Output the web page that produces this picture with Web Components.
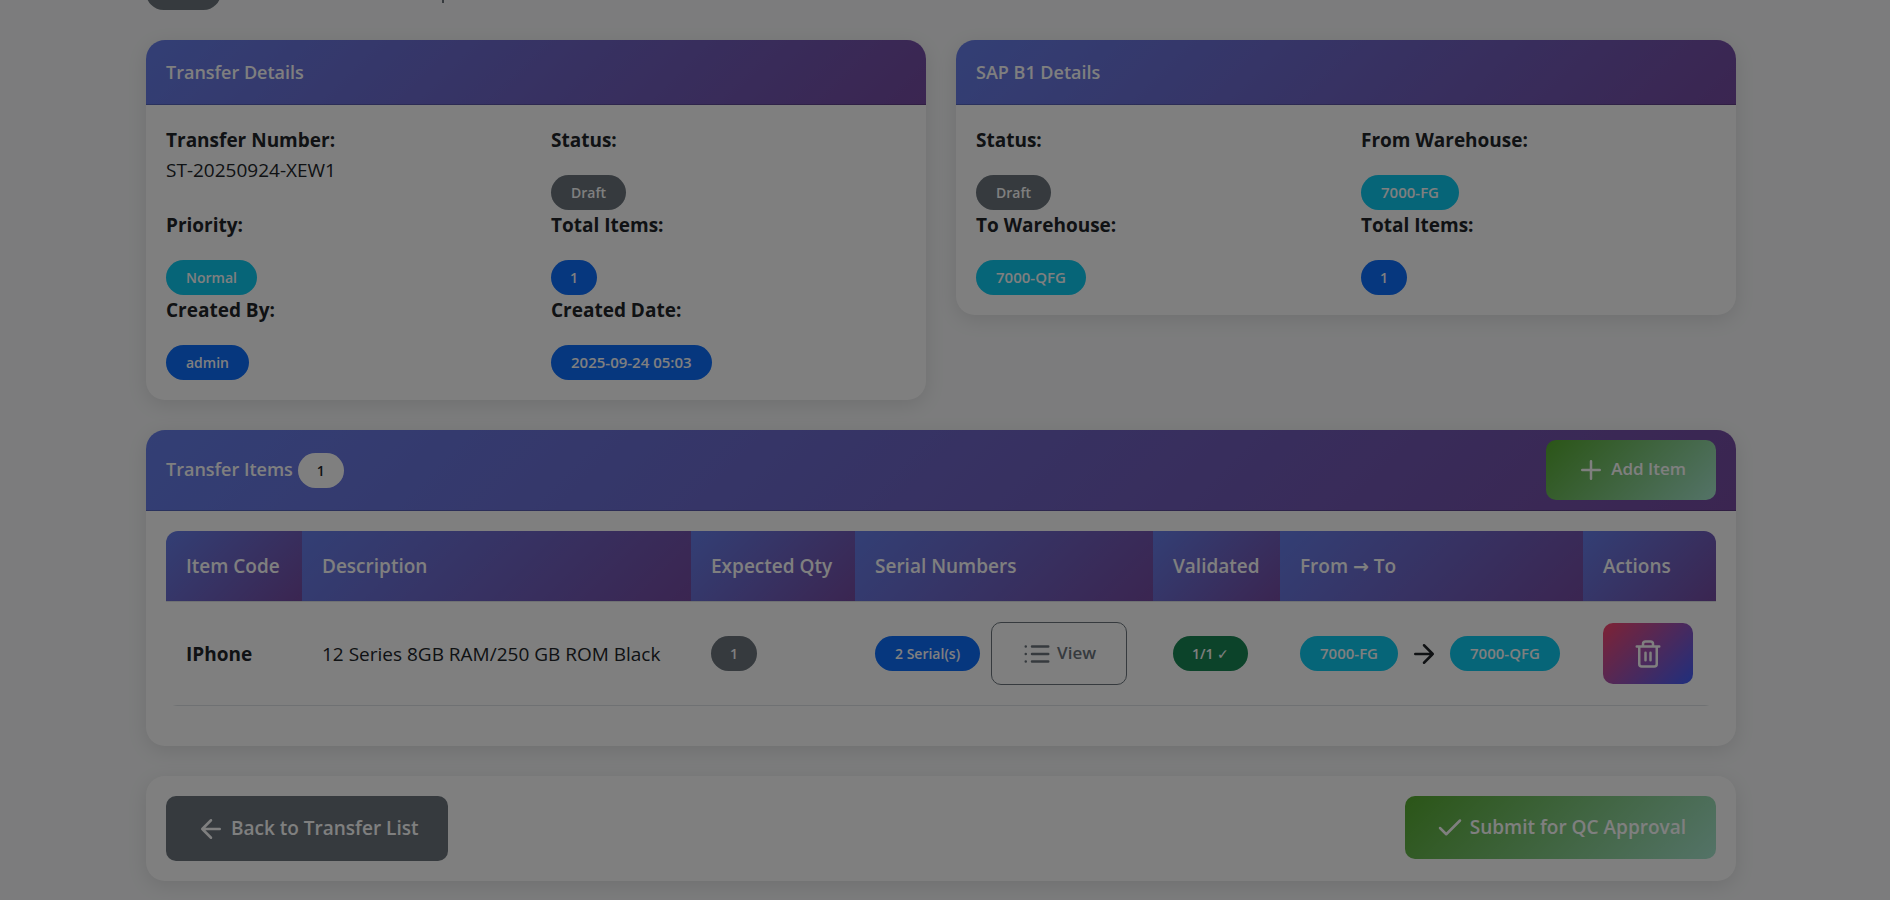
<!DOCTYPE html>
<html lang="en">
<head>
<meta charset="utf-8">
<meta name="viewport" content="width=device-width, initial-scale=1">
<title>Serial Transfer</title>
<style>
  html { overflow: hidden; }
  body {
    margin: 0;
    background: #f8f9fa;
    color: #212529;
    font: 19px/30px "Open Sans", "Noto Sans", "DejaVu Sans", sans-serif;
  }
</style>
</head>
<body>
<transfer-page></transfer-page>
<modal-backdrop></modal-backdrop>

<script>
const define = (name, html, setup) => {
  const template = document.createElement('template');
  template.innerHTML = html;
  customElements.define(name, class extends HTMLElement {
    constructor() {
      super();
      this.attachShadow({ mode: 'open' }).append(template.content.cloneNode(true));
    }
    connectedCallback() { if (setup) setup(this, this.shadowRoot); }
  });
};

const ICONS = {
  plus: '<path d="M12 5v14M5 12h14"/>',
  check: '<path d="M20 6L9 17l-5-5"/>',
  left: '<path d="M19 12H5M12 19l-7-7 7-7"/>',
  right: '<path d="M5 12h14M12 5l7 7-7 7"/>',
  list: '<path d="M8 6h13M8 12h13M8 18h13M3 6h.01M3 12h.01M3 18h.01"/>',
  trash: '<path d="M3 6h18M19 6v14a2 2 0 0 1-2 2H7a2 2 0 0 1-2-2V6M8 6V4a2 2 0 0 1 2-2h4a2 2 0 0 1 2 2v2M10 11v6M14 11v6"/>'
};

define('line-icon', `
  <style>
    :host { display: block; flex: none; width: 30px; height: 30px; }
    svg { display: block; width: 100%; height: 100%; fill: none; stroke: currentColor;
          stroke-width: 2; stroke-linecap: round; stroke-linejoin: round; }
  </style>
  <svg viewBox="0 0 24 24" aria-hidden="true"></svg>`,
  (host, root) => { root.querySelector('svg').innerHTML = ICONS[host.getAttribute('name')]; });

define('pill-badge', `
  <style>
    :host { display: inline-block; box-sizing: border-box; height: 35px;
            padding: 0 20px; border-radius: 20px; background: #6c757d; color: #fff;
            font-size: 14px; font-weight: 600; line-height: 35px; text-align: center; white-space: nowrap; }
    :host([tone="info"]) { background: #0dcaf0; }
    :host([tone="primary"]) { background: #0d6efd; }
    :host([tone="success"]) { background: #198754; }
    :host([tone="light"]) { background: #fff; color: #212529; }
    :host([code]) { font-size: 15px; }
    :host([count]) { padding: 0 19px; }
  </style>
  <slot></slot>`);

define('detail-field', `
  <style>
    :host { display: block; height: 85px; }
    dt { font-weight: 700; }
    dl, dd { margin: 0; }
    dl { display: flex; flex-direction: column; gap: 20px; }
    dd { display: flex; }
    :host([plain]) dl { gap: 0; }
  </style>
  <dl><dt></dt><dd><slot></slot></dd></dl>`,
  (host, root) => { root.querySelector('dt').textContent = host.getAttribute('label'); });

define('panel-card', `
  <style>
    :host { display: block; border-radius: 19px; background: #fff;
            box-shadow: 0 5px 20px rgba(0, 0, 0, .1); overflow: hidden; }
    header { display: flex; align-items: center; justify-content: space-between;
             min-height: 44px; padding: 10px 20px; color: #fff;
             border-bottom: 1px solid rgba(0, 0, 0, .175);
             background: linear-gradient(135deg, #667eea 0%, #764ba2 100%) border-box; }
    :host([bare]) header { display: none; }
    h2 { display: flex; align-items: baseline; gap: 5px; margin: 0; font-size: 18px; font-weight: 600; }
    .body { padding: 20px; }
  </style>
  <header><h2><span></span><slot name="count"></slot></h2><slot name="actions"></slot></header>
  <div class="body"><slot></slot></div>`,
  (host, root) => { root.querySelector('span').textContent = host.getAttribute('heading') || ''; });

const BUTTON_CSS = `
  :host { display: block; }
  .btn { display: flex; align-items: center; gap: 5px; box-sizing: border-box; margin: 0;
         height: 63px; padding: 0 30px; border: 0; border-radius: 10px; cursor: pointer;
         font: inherit; font-weight: 600; color: #fff; text-decoration: none; white-space: nowrap;
         background: #6c757d; }
  .label { padding-bottom: 2px; }
  :host([kind="back"]) .btn { height: 65px; }
  :host([kind="success"]) .btn { background: linear-gradient(135deg, #56ab2f 0%, #a8e6cf 100%); }
  :host([kind="danger"]) .btn { height: 61px; gap: 0; background: linear-gradient(135deg, #fc466b 0%, #3f5efb 100%); }
  :host([kind="outline"]) .btn { background: none; border: 1px solid #6c757d; color: #6c757d; }
  :host([small]) .btn { font-size: 17px; }
  :host([short]) .btn { height: 60px; }
`;
const addIcon = (root, name) => {
  const icon = document.createElement('line-icon');
  icon.setAttribute('name', name);
  root.querySelector('.btn').prepend(icon);
};
define('action-button', `<style>${BUTTON_CSS}</style>
  <button class="btn" type="button"><span class="label"><slot></slot></span></button>`,
  (host, root) => {
    addIcon(root, host.getAttribute('icon'));
    if (host.hasAttribute('label')) root.querySelector('button').setAttribute('aria-label', host.getAttribute('label'));
  });
define('action-link', `<style>${BUTTON_CSS}</style>
  <a class="btn" href="#transfers"><span class="label"><slot></slot></span></a>`,
  (host, root) => addIcon(root, host.getAttribute('icon')));

define('items-table', `
  <style>
    :host { display: block; margin-bottom: 20px; border-radius: 12px; overflow: hidden; }
    table { width: 100%; table-layout: fixed; border-spacing: 0; }
    th, td { padding: 20px 0 20px 20px; text-align: left; white-space: nowrap; border-bottom: 1px solid #dee2e6; }
    td { height: 63px; }
    th { font-weight: 600; color: #fff;
         background: linear-gradient(135deg, #667eea 0%, #764ba2 100%) padding-box; }
    .row { display: flex; align-items: center; gap: 11px; }
    pill-badge { display: block; width: fit-content; }
    .code { font-weight: 700; }
    action-button { width: fit-content; }
  </style>
  <table>
    <colgroup>
      <col style="width:136px"><col style="width:389px"><col style="width:164px"><col style="width:298px">
      <col style="width:127px"><col style="width:303px"><col style="width:133px">
    </colgroup>
    <thead>
      <tr><th>Item Code</th><th>Description</th><th>Expected Qty</th><th>Serial Numbers</th>
          <th>Validated</th><th>From → To</th><th>Actions</th></tr>
    </thead>
    <tbody>
      <tr>
        <td class="code">IPhone</td>
        <td>12 Series 8GB RAM/250 GB ROM Black</td>
        <td><pill-badge count>1</pill-badge></td>
        <td><div class="row"><pill-badge tone="primary">2 Serial(s)</pill-badge>
          <action-button kind="outline" icon="list" small>View</action-button></div></td>
        <td><pill-badge count tone="success">1/1 ✓</pill-badge></td>
        <td><div class="row"><pill-badge code tone="info">7000-FG</pill-badge><line-icon name="right"></line-icon>
          <pill-badge code tone="info">7000-QFG</pill-badge></div></td>
        <td><action-button kind="danger" icon="trash" label="Delete item"></action-button></td>
      </tr>
    </tbody>
  </table>`);

define('transfer-page', `
  <style>
    :host { display: block; padding: 0 154px 0 146px; }
    main { display: flex; flex-direction: column; gap: 30px; max-width: 1590px; margin: 0 auto; padding-bottom: 30px; }
    .intro { display: flex; align-items: flex-end; height: 10px; overflow: hidden; }
    .intro pill-badge { width: 75px; }
    .intro i { width: 2px; height: 3px; margin: 0 0 7px 221px; background: #6c757d; }
    .pair { display: grid; grid-template-columns: 1fr 1fr; gap: 30px; align-items: start; }
    .fields { display: grid; grid-template-columns: 1fr 1fr; column-gap: 30px; }
    .foot { display: flex; justify-content: space-between; align-items: flex-start; }
  </style>
  <main>
    <div class="intro"><pill-badge></pill-badge><i></i></div>
    <div class="pair">
      <panel-card heading="Transfer Details">
        <div class="fields">
          <detail-field label="Transfer Number:" plain>ST-20250924-XEW1</detail-field>
          <detail-field label="Status:"><pill-badge>Draft</pill-badge></detail-field>
          <detail-field label="Priority:"><pill-badge tone="info">Normal</pill-badge></detail-field>
          <detail-field label="Total Items:"><pill-badge count tone="primary">1</pill-badge></detail-field>
          <detail-field label="Created By:"><pill-badge tone="primary">admin</pill-badge></detail-field>
          <detail-field label="Created Date:"><pill-badge code tone="primary">2025-09-24 05:03</pill-badge></detail-field>
        </div>
      </panel-card>
      <panel-card heading="SAP B1 Details">
        <div class="fields">
          <detail-field label="Status:"><pill-badge>Draft</pill-badge></detail-field>
          <detail-field label="From Warehouse:"><pill-badge code tone="info">7000-FG</pill-badge></detail-field>
          <detail-field label="To Warehouse:"><pill-badge code tone="info">7000-QFG</pill-badge></detail-field>
          <detail-field label="Total Items:"><pill-badge count tone="primary">1</pill-badge></detail-field>
        </div>
      </panel-card>
    </div>
    <panel-card heading="Transfer Items">
      <pill-badge slot="count" count tone="light">1</pill-badge>
      <action-button slot="actions" kind="success" icon="plus" small short>Add Item</action-button>
      <items-table></items-table>
    </panel-card>
    <panel-card bare>
      <div class="foot">
        <action-link kind="back" icon="left">Back to Transfer List</action-link>
        <action-button kind="success" icon="check">Submit for QC Approval</action-button>
      </div>
    </panel-card>
  </main>`);

define('modal-backdrop', `
  <style>:host { display: block; position: fixed; inset: 0; background: rgba(0, 0, 0, .5); }</style>`);
</script>
</body>
</html>
